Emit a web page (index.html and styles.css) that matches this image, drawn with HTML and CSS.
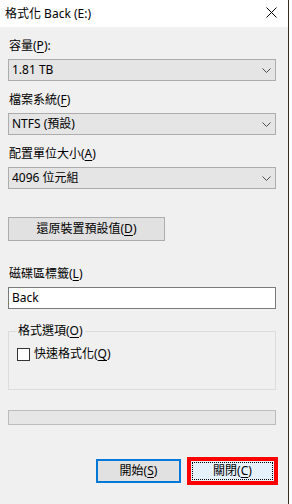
FILE: index.html
```html
<!DOCTYPE html>
<html lang="zh-Hant">
<head>
<meta charset="utf-8">
<title>格式化 Back (E:)</title>
<link rel="stylesheet" href="styles.css">
</head>
<body>
<div class="dialog">
  <div class="titlebar">
    <span class="title">格式化 Back (E:)</span>
    <svg class="close" width="11" height="11" viewBox="0 0 11 11"><path d="M0.5 0.5 L10.5 10.5 M10.5 0.5 L0.5 10.5" stroke="#000" stroke-width="1" fill="none"/></svg>
  </div>
  <div class="content">
    <div class="field first">
      <div class="label">容量(<u>P</u>):</div>
      <div class="combo"><span>1.81 TB</span><svg class="chev" width="9" height="5" viewBox="0 0 9 5"><path d="M0.5 0.5 L4.5 4.5 L8.5 0.5" stroke="#4d4d4d" fill="none"/></svg></div>
    </div>
    <div class="field">
      <div class="label">檔案系統(<u>F</u>)</div>
      <div class="combo"><span>NTFS (預設)</span><svg class="chev" width="9" height="5" viewBox="0 0 9 5"><path d="M0.5 0.5 L4.5 4.5 L8.5 0.5" stroke="#4d4d4d" fill="none"/></svg></div>
    </div>
    <div class="field">
      <div class="label">配置單位大小(<u>A</u>)</div>
      <div class="combo"><span>4096 位元組</span><svg class="chev" width="9" height="5" viewBox="0 0 9 5"><path d="M0.5 0.5 L4.5 4.5 L8.5 0.5" stroke="#4d4d4d" fill="none"/></svg></div>
    </div>
    <button class="btn restore">還原裝置預設值(<u>D</u>)</button>
    <div class="field vol">
      <div class="label">磁碟區標籤(<u>L</u>)</div>
      <div class="textbox">Back</div>
    </div>
    <fieldset class="group">
      <legend>格式選項(<u>O</u>)</legend>
      <label class="check"><span class="box"></span><span>快速格式化(<u>Q</u>)</span></label>
    </fieldset>
    <div class="progress"></div>
    <div class="actions">
      <button class="btn start">開始(<u>S</u>)</button>
      <div class="mark"><button class="btn closebtn"><span class="focus">關閉(<u>C</u>)</span></button></div>
    </div>
  </div>
</div>
</body>
</html>
```
FILE: styles.css
```css
html, body {
  margin: 0;
  padding: 0;
  background: #ffffff;
}
body {
  width: 292px;
  height: 504px;
  overflow: hidden;
  font-family: "Noto Sans", "Noto Sans CJK TC", sans-serif;
  font-size: 12px;
  color: #000;
}
u {
  text-decoration: underline;
  text-underline-offset: 2px;
  text-decoration-thickness: 1px;
}
.dialog {
  width: 288px;
  height: 504px;
  background: #f0f0f0;
  border-right: 1px solid #3e2c20;
}
.titlebar {
  height: 27px;
  background: #ffffff;
  display: flex;
  align-items: center;
  padding-left: 5px;
}
.title {
  line-height: 27px;
}
.close {
  margin-left: auto;
  margin-right: 11px;
  margin-top: -2px;
}
.content {
  padding: 0 12px 0 8px;
}
.field {
  margin-top: 11px;
}
.field.first {
  margin-top: 11px;
}
.label {
  height: 16px;
  line-height: 16px;
  margin-bottom: 5px;
  padding-left: 1px;
}
.combo {
  height: 20px;
  border: 1px solid #adadad;
  background: #e5e5e5;
  display: flex;
  align-items: center;
  padding-left: 3px;
  padding-right: 4px;
  line-height: 20px;
}
.combo .chev {
  margin-left: auto;
}
.btn {
  font-family: inherit;
  font-size: 12px;
  color: #000;
  background: #e1e1e1;
  border: 1px solid #adadad;
  padding: 0;
  margin: 0;
  line-height: 20px;
  display: block;
}
.restore {
  margin-top: 28px;
  width: 157px;
  height: 24px;
}
.vol {
  margin-top: 25px;
}
.textbox {
  height: 20px;
  border: 1px solid #7a7a7a;
  background: #ffffff;
  padding-left: 3px;
  line-height: 20px;
}
.group {
  margin: 14px 0 0 0;
  padding: 7px 8px 0 8px;
  height: 58px;
  border: 1px solid #dcdcdc;
  min-width: 0;
}
.group legend {
  padding: 0 2px 0 1px;
  margin-left: 0;
  line-height: 16px;
}
.check {
  display: flex;
  align-items: center;
  gap: 4px;
  line-height: 16px;
}
.box {
  width: 11px;
  height: 11px;
  border: 1px solid #333333;
  background: #ffffff;
}
.progress {
  margin-top: 20px;
  height: 13px;
  border: 1px solid #bcbcbc;
  background: #e6e6e6;
}
.actions {
  margin-top: 32px;
  display: flex;
  justify-content: flex-end;
  align-items: center;
  gap: 6px;
  margin-right: -2px;
}
.start {
  width: 85px;
  height: 24px;
  border: 2px solid #0078d7;
}
.mark {
  border: 4px solid #ff0000;
  padding: 1px;
  background: #e5f1fb;
  width: 81px;
  height: 18px;
}
.closebtn {
  width: 81px;
  height: 18px;
  border: none;
  background: #e5f1fb;
  padding: 0;
}
.focus {
  display: flex;
  align-items: center;
  justify-content: center;
  height: 18px;
  border: 1px dotted #000;
  box-sizing: border-box;
  line-height: 16px;
}
```
